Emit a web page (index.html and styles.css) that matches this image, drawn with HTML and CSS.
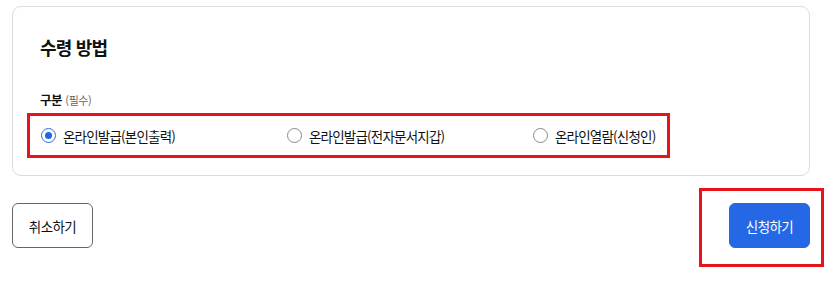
FILE: index.html
```html
<!DOCTYPE html>
<html lang="ko">
<head>
<meta charset="utf-8">
<link rel="stylesheet" href="styles.css">
</head>
<body>
<div class="page">
  <section class="card">
    <h2 class="title">수령 방법</h2>
    <div class="field-label">구분 <span class="req">(필수)</span></div>
    <div class="radio-group">
      <label class="option"><span class="radio checked"></span><span class="opt-text">온라인발급(본인출력)</span></label>
      <label class="option"><span class="radio"></span><span class="opt-text">온라인발급(전자문서지갑)</span></label>
      <label class="option last"><span class="radio"></span><span class="opt-text">온라인열람(신청인)</span></label>
    </div>
  </section>
  <div class="actions">
    <button class="btn btn-cancel">취소하기</button>
    <div class="highlight">
      <button class="btn btn-submit">신청하기</button>
    </div>
  </div>
</div>
</body>
</html>
```
FILE: styles.css
```css
html, body {
  margin: 0;
  padding: 0;
  background: #fff;
}
body {
  font-family: "Noto Sans CJK KR", "Noto Sans", sans-serif;
  color: #111;
}
.page {
  width: 798px;
  padding: 6px 0 0 12px;
}
.card {
  border: 1px solid #dcdcdc;
  border-radius: 9px;
  padding: 28px 27px 18px 27px;
  height: 122px;
}
.title {
  margin: 0;
  font-size: 18px;
  font-weight: 700;
  line-height: 24px;
  letter-spacing: -0.8px;
}
.field-label {
  margin-top: 33px;
  font-size: 12.5px;
  font-weight: 700;
  line-height: 16px;
  letter-spacing: -0.4px;
}
.req {
  font-size: 11px;
  font-weight: 400;
  color: #666;
}
.radio-group {
  display: inline-flex;
  align-items: center;
  margin: 5px 0 0 -13px;
  border: 3px solid #e8131c;
  height: 39px;
  padding: 0 11px 0 11px;
}
.option {
  display: flex;
  align-items: center;
  width: 246px;
  font-size: 13.5px;
  letter-spacing: -0.8px;
  line-height: 18px;
  color: #111;
}
.option.last {
  width: auto;
}
.radio {
  box-sizing: border-box;
  width: 15px;
  height: 15px;
  border: 1px solid #8a8a8a;
  border-radius: 50%;
  margin-right: 7px;
  position: relative;
  flex: none;
}
.radio.checked {
  border-color: #2a6fe0;
}
.radio.checked::after {
  content: "";
  position: absolute;
  left: 3px;
  top: 3px;
  width: 7px;
  height: 7px;
  border-radius: 50%;
  background: #1f66e5;
}
.actions {
  display: flex;
  justify-content: space-between;
  align-items: flex-start;
  margin-top: 12px;
}
.btn {
  font-family: "Noto Sans CJK KR", "Noto Sans", sans-serif;
  font-size: 13.5px;
  letter-spacing: -0.6px;
  width: 81px;
  height: 45px;
  border-radius: 6px;
  cursor: pointer;
}
.btn-cancel {
  margin-top: 15px;
  background: #fff;
  border: 1px solid #666;
  color: #111;
}
.highlight {
  border: 3px solid #e8131c;
  padding: 12px 11px 16px 27px;
  margin-right: -14px;
}
.btn-submit {
  display: block;
  background: #2468e6;
  border: 1px solid #2468e6;
  color: #fff;
}
```
